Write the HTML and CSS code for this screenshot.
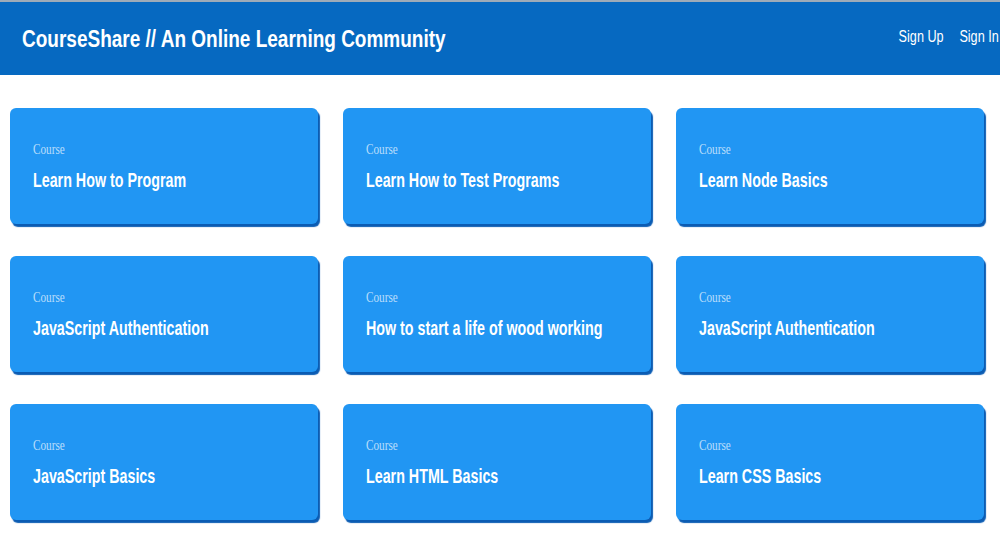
FILE: index.html
```html
<!DOCTYPE html>
<html lang="en">
<head>
<meta charset="utf-8">
<title>CourseShare</title>
<link rel="stylesheet" href="styles.css">
</head>
<body>
<header class="topbar">
  <h1 class="brand"><span class="squeeze">CourseShare // An Online Learning Community</span></h1>
  <nav class="nav">
    <a class="nav-link" href="#">Sign Up</a>
    <a class="nav-link" href="#">Sign In</a>
  </nav>
</header>
<main class="grid">
  <article class="card"><div class="label">Course</div><h2 class="title">Learn How to Program</h2></article>
  <article class="card"><div class="label">Course</div><h2 class="title">Learn How to Test Programs</h2></article>
  <article class="card"><div class="label">Course</div><h2 class="title">Learn Node Basics</h2></article>
  <article class="card"><div class="label">Course</div><h2 class="title">JavaScript Authentication</h2></article>
  <article class="card"><div class="label">Course</div><h2 class="title">How to start a life of wood working</h2></article>
  <article class="card"><div class="label">Course</div><h2 class="title">JavaScript Authentication</h2></article>
  <article class="card"><div class="label">Course</div><h2 class="title">JavaScript Basics</h2></article>
  <article class="card"><div class="label">Course</div><h2 class="title">Learn HTML Basics</h2></article>
  <article class="card"><div class="label">Course</div><h2 class="title">Learn CSS Basics</h2></article>
</main>
</body>
</html>
```

FILE: styles.css
```css
* { box-sizing: border-box; }

html, body {
  margin: 0;
  padding: 0;
  background: #ffffff;
  overflow: hidden;
}

body {
  font-family: "Liberation Sans", Arial, sans-serif;
  width: 1000px;
  height: 544px;
}

.topbar {
  height: 75px;
  border-top: 2px solid #9eabb8;
  background: #0669c1;
  display: flex;
  align-items: center;
  justify-content: space-between;
  padding: 0 1px 0 22px;
  color: #ffffff;
}

.brand {
  margin: 0;
  font-size: 23px;
  font-weight: 700;
  line-height: 28px;
  white-space: nowrap;
}

.squeeze {
  display: inline-block;
  transform: scaleX(0.826);
  transform-origin: left center;
}

.nav {
  display: flex;
  gap: 20px;
  transform: scaleX(0.79);
  transform-origin: right center;
  margin-top: -3px;
}

.nav-link {
  color: #ffffff;
  text-decoration: none;
  font-size: 16px;
  line-height: 20px;
  white-space: nowrap;
}

.grid {
  display: grid;
  grid-template-columns: repeat(3, 308px);
  grid-auto-rows: 116px;
  column-gap: 25px;
  row-gap: 32px;
  padding: 33px 0 0 10px;
}

.card {
  background: #2196f3;
  border-radius: 6px;
  box-shadow: 2px 3px 1px #0b5cb3;
  padding: 34px 0 0 23px;
  color: #ffffff;
}

.label {
  font-family: "Liberation Serif", "Times New Roman", serif;
  font-size: 14px;
  line-height: 16px;
  color: rgba(255, 255, 255, 0.7);
  transform: scaleX(0.8);
  transform-origin: left center;
  white-space: nowrap;
}

.title {
  margin: 10px 0 0 0;
  font-size: 21px;
  font-weight: 700;
  line-height: 24px;
  transform: scaleX(0.68);
  transform-origin: left center;
  white-space: nowrap;
}
```
